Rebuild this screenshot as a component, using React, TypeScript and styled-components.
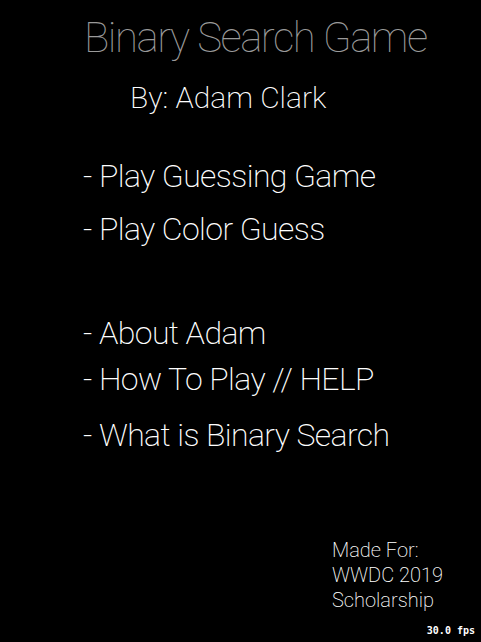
import React from "react";
import styled, { createGlobalStyle } from "styled-components";

const Global = createGlobalStyle`
  html, body { margin: 0; padding: 0; background: #000; }
  body { font-family: Roboto, "Liberation Sans", sans-serif; }
`;

const Scene = styled.main`
  width: 481px;
  height: 642px;
  background: #000;
  display: flex;
  flex-direction: column;
  padding-top: 17px;
  box-sizing: border-box;
  overflow: hidden;
`;

const Title = styled.h1`
  margin: 0 0 0 84px;
  font-size: 42px;
  line-height: 42px;
  font-weight: 100;
  letter-spacing: -1.5px;
  color: #9a9a9a;
  white-space: nowrap;
`;

const Byline = styled.h2`
  margin: 24px 0 0 130px;
  font-size: 30px;
  line-height: 30px;
  font-weight: 200;
  color: #fff;
  white-space: nowrap;
`;

const Menu = styled.nav`
  display: flex;
  flex-direction: column;
  margin-left: 83px;
`;

const Item = styled.div<{ $top: number }>`
  margin-top: ${(p) => p.$top}px;
  font-size: 32px;
  line-height: 32px;
  font-weight: 200;
  letter-spacing: -0.6px;
  color: #fff;
  white-space: nowrap;
`;

const Credits = styled.div`
  margin: 87px 0 0 332px;
  font-size: 20px;
  line-height: 25px;
  font-weight: 200;
  color: #fff;
`;

const Fps = styled.div`
  margin-top: 12px;
  align-self: flex-end;
  padding-right: 6px;
  font-family: "DejaVu Sans Mono", "Liberation Mono", monospace;
  font-weight: bold;
  font-size: 10px;
  line-height: 12px;
  color: #fff;
`;

const items: [string, number][] = [
  ["- Play Guessing Game", 47],
  ["- Play Color Guess", 21],
  ["- About Adam", 72],
  ["- How To Play // HELP", 14],
  ["- What is Binary Search", 24],
];

export default function App() {
  return (
    <>
      <Global />
      <Scene>
        <Title>Binary Search Game</Title>
        <Byline>By: Adam Clark</Byline>
        <Menu>
          {items.map(([t, m]) => (
            <Item key={t} $top={m}>
              {t}
            </Item>
          ))}
        </Menu>
        <Credits>
          Made For:
          <br />
          WWDC 2019
          <br />
          Scholarship
        </Credits>
        <Fps>30.0 fps</Fps>
      </Scene>
    </>
  );
}
